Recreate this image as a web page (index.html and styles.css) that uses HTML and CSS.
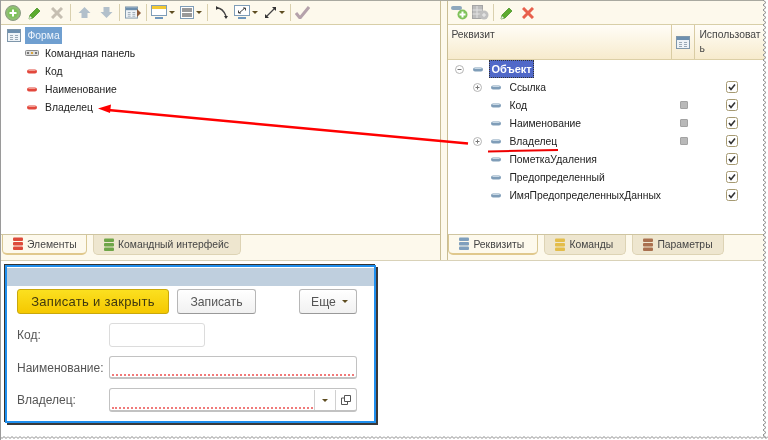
FILE: index.html
```html
<!DOCTYPE html>
<html lang="ru">
<head>
    <meta charset="UTF-8">
    <title>Форма</title>
    <link rel="stylesheet" href="styles.css">
</head>
<body>

<svg class="defs" width="0" height="0">
    <defs>
        <symbol id="i-form" viewBox="0 0 14 13">
            <rect x="0.5" y="0.5" width="13" height="12" fill="#eef3f7" stroke="#7f97ab"/>
            <rect x="1" y="1" width="12" height="3" fill="#6d8fae"/>
            <path d="M3 6.500h3M8 6.500h3M3 8.500h3M8 8.500h3M3 10.500h3M8 10.500h3" stroke="#9aa9b6"/>
        </symbol>
        <symbol id="i-red" viewBox="0 0 10 5">
            <rect x="0" y="0.5" width="10" height="4" rx="2" fill="#e2473c"/>
            <rect x="1.5" y="1" width="7" height="1" fill="#f09a8e"/>
        </symbol>
        <symbol id="i-blue" viewBox="0 0 10 5">
            <rect x="0" y="0.5" width="10" height="4" rx="2" fill="#7f9db8"/>
            <rect x="1.5" y="1" width="7" height="1" fill="#c6d6e3"/>
        </symbol>
        <symbol id="i-stack" viewBox="0 0 10 14">
            <rect x="0" y="0.5" width="10" height="3.6" rx="1" fill="currentColor"/>
            <rect x="0" y="5" width="10" height="3.6" rx="1" fill="currentColor"/>
            <rect x="0" y="9.5" width="10" height="3.6" rx="1" fill="currentColor"/>
        </symbol>
        <symbol id="i-pencil" viewBox="0 0 14 14">
            <path d="M1 13l1-4 7-7 3 3-7 7z" fill="#5cab2e" stroke="#3c8a1c" stroke-width=".7"/>
            <path d="M1 13l1-3 2 2z" fill="#eee"/>
        </symbol>
        <symbol id="i-caret" viewBox="0 0 6 3">
            <path d="M0 0h6L3 3z" fill="#5e4d20"/>
        </symbol>
        <symbol id="i-plus" viewBox="0 0 9 9">
            <circle cx="4.5" cy="4.5" r="4" fill="#fff" stroke="#b4b4b4"/>
            <path d="M2.500 4.500h4M4.500 2.500v4" stroke="#777"/>
        </symbol>
        <symbol id="i-check" viewBox="0 0 12 12">
            <rect x="0.5" y="0.5" width="11" height="11" rx="2" fill="#fff" stroke="#a69a72"/>
            <path d="M3 6l2 2.500 4-5" fill="none" stroke="#333" stroke-width="1.600"/>
        </symbol>
    </defs>
</svg>

<div class="shot">
    <div class="top">
        <!-- left panel -->
        <div class="panel panel-left">
            <div class="toolbar">
                <span class="tool">
                    <svg width="16" height="16" viewBox="0 0 16 16"><circle cx="8" cy="8" r="7.500" fill="#8fbf72" stroke="#8c9a84"/><circle cx="8" cy="8" r="5" fill="#7fc25a"/><path d="M4.500 8h7M8 4.500v7" stroke="#fff" stroke-width="2"/></svg>
                </span>
                <span class="tool"><svg width="14" height="14"><use href="#i-pencil"/></svg></span>
                <span class="tool">
                    <svg width="12" height="12" viewBox="0 0 12 12"><path d="M1 1l10 10M11 1L1 11" stroke="#c6bfb2" stroke-width="3"/></svg>
                </span>
                <span class="sep"></span>
                <span class="tool">
                    <svg width="13" height="13" viewBox="0 0 13 13"><path d="M6.500 1L12.500 7H9.500V12H3.500V7H.5z" fill="#b2c0cb"/></svg>
                </span>
                <span class="tool">
                    <svg width="13" height="13" viewBox="0 0 13 13"><path d="M6.500 12L12.500 6H9.500V1H3.500V6H.5z" fill="#b2c0cb"/></svg>
                </span>
                <span class="sep"></span>
                <span class="tool">
                    <svg width="16" height="13" viewBox="0 0 16 13"><use href="#i-form" width="13" height="13"/><path d="M12 3l4 4-4 4z" fill="#8a5a3a"/></svg>
                </span>
                <span class="sep"></span>
                <span class="tool tool-drop">
                    <svg width="16" height="15" viewBox="0 0 16 15"><rect x="0.500" y="0.500" width="15" height="10" fill="#fff" stroke="#7f9db8"/><rect x="1" y="1" width="14" height="3" fill="#f2c933"/><path d="M4 13h8" stroke="#6f97bd" stroke-width="2"/></svg>
                    <svg class="caret" width="6" height="3"><use href="#i-caret"/></svg>
                </span>
                <span class="tool tool-drop">
                    <svg width="14" height="13" viewBox="0 0 14 13"><rect x="0.500" y="0.500" width="13" height="12" fill="#fff" stroke="#7f9db8"/><rect x="2" y="2" width="10" height="4" fill="#999"/><rect x="2" y="7" width="10" height="4" fill="#999"/></svg>
                    <svg class="caret" width="6" height="3"><use href="#i-caret"/></svg>
                </span>
                <span class="sep"></span>
                <span class="tool">
                    <svg width="13" height="13" viewBox="0 0 13 13"><path d="M2 2c4 0 7 3 9 8" fill="none" stroke="#444" stroke-width="1.300"/><path d="M1 0v4l3-2zM9 10h4l-2 3z" fill="#333"/></svg>
                </span>
                <span class="tool tool-drop">
                    <svg width="16" height="15" viewBox="0 0 16 15"><rect x="0.500" y="0.500" width="15" height="10" fill="#fff" stroke="#7f9db8"/><path d="M5 8l6-5M9 3h2.500v2.500M7 8H4.500V5.500" fill="none" stroke="#444"/><path d="M4 13h8" stroke="#6f97bd" stroke-width="2"/></svg>
                    <svg class="caret" width="6" height="3"><use href="#i-caret"/></svg>
                </span>
                <span class="tool tool-drop">
                    <svg width="13" height="13" viewBox="0 0 13 13"><path d="M2 11l9-9" stroke="#444" stroke-width="1.300"/><path d="M8 1h4v4zM1 8v4h4z" fill="#333"/></svg>
                    <svg class="caret" width="6" height="3"><use href="#i-caret"/></svg>
                </span>
                <span class="sep"></span>
                <span class="tool tool-last">
                    <svg width="15" height="13" viewBox="0 0 15 13"><path d="M1 7l4 5L14 1" fill="none" stroke="#b5a2ab" stroke-width="3"/></svg>
                </span>
            </div>

            <div class="form-tree">
                <div class="row row-root">
                    <svg class="row-icon" width="14" height="13"><use href="#i-form"/></svg>
                    <span class="label-sel">Форма</span>
                </div>
                <div class="row row-child">
                    <span class="row-ic">
                        <svg width="14" height="6" viewBox="0 0 14 6"><rect x="0.500" y="0.500" width="13" height="5" rx="1" fill="#ddd" stroke="#8a8a8a"/><path d="M2 2h2v2H2z" fill="#777"/><path d="M6 2h2v2H6z" fill="#d9a53b"/><path d="M10 2h2v2h-2z" fill="#777"/></svg>
                    </span>
                    Командная панель
                </div>
                <div class="row row-child">
                    <span class="row-ic"><svg width="10" height="5"><use href="#i-red"/></svg></span>
                    Код
                </div>
                <div class="row row-child">
                    <span class="row-ic"><svg width="10" height="5"><use href="#i-red"/></svg></span>
                    Наименование
                </div>
                <div class="row row-child">
                    <span class="row-ic"><svg width="10" height="5"><use href="#i-red"/></svg></span>
                    Владелец
                </div>
            </div>

            <div class="tabs">
                <div class="tab tab-on tab-elements">
                    <svg class="stack-red" width="10" height="14"><use href="#i-stack"/></svg>
                    Элементы
                </div>
                <div class="tab tab-cmd">
                    <svg class="stack-green" width="10" height="14"><use href="#i-stack"/></svg>
                    Командный интерфейс
                </div>
            </div>
        </div>

        <!-- right panel -->
        <div class="panel panel-right">
            <div class="toolbar">
                <span class="tool tool-r1">
                    <svg width="17" height="15" viewBox="0 0 17 15"><rect x="0" y="1" width="11" height="4" rx="2" fill="#8ea8bd"/><circle cx="11.500" cy="9.500" r="5" fill="#7fc25a"/><path d="M8.500 9.500h6M11.500 6.500v6" stroke="#fff" stroke-width="2"/></svg>
                </span>
                <span class="tool tool-r1">
                    <svg width="17" height="15" viewBox="0 0 17 15"><rect x="0.500" y="0.500" width="10" height="13" fill="#bdbdbd" stroke="#a5a5a5"/><path d="M.5 5h10M.5 9h10M5 1v12" stroke="#e3e3e3"/><circle cx="12" cy="10" r="4.500" fill="#c0c0c0"/><path d="M10 10h4M12 8v4" stroke="#eee"/></svg>
                </span>
                <span class="sep"></span>
                <span class="tool"><svg width="14" height="14"><use href="#i-pencil"/></svg></span>
                <span class="tool tool-r4">
                    <svg width="12" height="12" viewBox="0 0 12 12"><path d="M1 1l10 10M11 1L1 11" stroke="#e8604c" stroke-width="3"/></svg>
                </span>
            </div>

            <div class="grid-head">
                <div class="hcol hcol-name">Реквизит</div>
                <div class="hcol hcol-mark"><svg width="14" height="13"><use href="#i-form"/></svg></div>
                <div class="hcol hcol-use">Использовать</div>
            </div>

            <div class="attr-tree">
                <div class="attr-row lvl-0">
                    <div class="attr-name">
                        <svg class="exp" width="9" height="9" viewBox="0 0 9 9"><circle cx="4.500" cy="4.500" r="4" fill="#fff" stroke="#b4b4b4"/><path d="M2.500 4.500h4" stroke="#777"/></svg>
                        <svg class="attr-ic" width="10" height="5"><use href="#i-blue"/></svg>
                        <span class="label-cur">Объект</span>
                    </div>
                    <div class="attr-mark"></div>
                    <div class="attr-use"></div>
                </div>
                <div class="attr-row">
                    <div class="attr-name">
                        <svg class="exp" width="9" height="9"><use href="#i-plus"/></svg>
                        <svg class="attr-ic" width="10" height="5"><use href="#i-blue"/></svg>
                        <span class="label">Ссылка</span>
                    </div>
                    <div class="attr-mark"></div>
                    <div class="attr-use"><svg width="12" height="12"><use href="#i-check"/></svg></div>
                </div>
                <div class="attr-row">
                    <div class="attr-name">
                        <span class="exp"></span>
                        <svg class="attr-ic" width="10" height="5"><use href="#i-blue"/></svg>
                        <span class="label">Код</span>
                    </div>
                    <div class="attr-mark"><span class="dot"></span></div>
                    <div class="attr-use"><svg width="12" height="12"><use href="#i-check"/></svg></div>
                </div>
                <div class="attr-row">
                    <div class="attr-name">
                        <span class="exp"></span>
                        <svg class="attr-ic" width="10" height="5"><use href="#i-blue"/></svg>
                        <span class="label">Наименование</span>
                    </div>
                    <div class="attr-mark"><span class="dot"></span></div>
                    <div class="attr-use"><svg width="12" height="12"><use href="#i-check"/></svg></div>
                </div>
                <div class="attr-row">
                    <div class="attr-name">
                        <svg class="exp" width="9" height="9"><use href="#i-plus"/></svg>
                        <svg class="attr-ic" width="10" height="5"><use href="#i-blue"/></svg>
                        <span class="label">Владелец</span>
                    </div>
                    <div class="attr-mark"><span class="dot"></span></div>
                    <div class="attr-use"><svg width="12" height="12"><use href="#i-check"/></svg></div>
                </div>
                <div class="attr-row">
                    <div class="attr-name">
                        <span class="exp"></span>
                        <svg class="attr-ic" width="10" height="5"><use href="#i-blue"/></svg>
                        <span class="label">ПометкаУдаления</span>
                    </div>
                    <div class="attr-mark"></div>
                    <div class="attr-use"><svg width="12" height="12"><use href="#i-check"/></svg></div>
                </div>
                <div class="attr-row">
                    <div class="attr-name">
                        <span class="exp"></span>
                        <svg class="attr-ic" width="10" height="5"><use href="#i-blue"/></svg>
                        <span class="label">Предопределенный</span>
                    </div>
                    <div class="attr-mark"></div>
                    <div class="attr-use"><svg width="12" height="12"><use href="#i-check"/></svg></div>
                </div>
                <div class="attr-row">
                    <div class="attr-name">
                        <span class="exp"></span>
                        <svg class="attr-ic" width="10" height="5"><use href="#i-blue"/></svg>
                        <span class="label">ИмяПредопределенныхДанных</span>
                    </div>
                    <div class="attr-mark"></div>
                    <div class="attr-use"><svg width="12" height="12"><use href="#i-check"/></svg></div>
                </div>
            </div>

            <div class="tabs tabs-right">
                <div class="tab tab-on tab-attrs">
                    <svg class="stack-blue" width="10" height="14"><use href="#i-stack"/></svg>
                    Реквизиты
                </div>
                <div class="tab tab-cmds">
                    <svg class="stack-yellow" width="10" height="14"><use href="#i-stack"/></svg>
                    Команды
                </div>
                <div class="tab tab-params">
                    <svg class="stack-brown" width="10" height="14"><use href="#i-stack"/></svg>
                    Параметры
                </div>
            </div>
        </div>
    </div>

    <!-- preview of the form -->
    <div class="preview">
        <div class="win">
            <div class="win-title"></div>
            <div class="win-bar">
                <button class="btn btn-main">Записать и закрыть</button>
                <button class="btn btn-save">Записать</button>
                <button class="btn btn-more">Еще<svg width="6" height="3"><use href="#i-caret"/></svg></button>
            </div>
            <div class="fields">
                <label class="f-label">Код:</label>
                <div class="inp inp-short"></div>
                <label class="f-label">Наименование:</label>
                <div class="inp"><span class="req"></span></div>
                <label class="f-label">Владелец:</label>
                <div class="inp inp-pick">
                    <span class="req"></span>
                    <span class="pick"><svg width="6" height="3"><use href="#i-caret"/></svg></span>
                    <span class="pick">
                        <svg width="10" height="10" viewBox="0 0 10 10"><path d="M3.500.5h6v6h-6zM3.500 3H.5v6.500h6V6.500" fill="none" stroke="#555"/></svg>
                    </span>
                </div>
            </div>
        </div>
    </div>

    <!-- annotations -->
    <svg class="marks" width="768" height="440" viewBox="0 0 768 440">
        <path d="M468 143.500L108 110" stroke="#f00" stroke-width="2.500" fill="none"/>
        <path d="M98 108.500L111 104.500L110 113z" fill="#f00"/>
        <path d="M488 151.500L558 150" stroke="#e00" stroke-width="2" fill="none"/>
    </svg>

    <!-- torn edges -->
    <svg class="torn torn-right" width="7" height="440">
        <defs>
            <pattern id="zig-v" width="7" height="10" patternUnits="userSpaceOnUse">
                <path d="M2 0L5 2.500L2 5L5 7.500L2 10H7V0z" fill="#fff"/>
                <path d="M2 0L5 2.500L2 5L5 7.500L2 10" fill="none" stroke="#8a8a8a"/>
            </pattern>
        </defs>
        <rect width="7" height="440" fill="url(#zig-v)"/>
    </svg>
    <svg class="torn torn-bottom" width="768" height="6">
        <defs>
            <pattern id="zig-h" width="8" height="6" patternUnits="userSpaceOnUse">
                <path d="M0 2.500L2 4.500L4 2.500L6 4.500L8 2.500V6H0z" fill="#fff"/>
                <path d="M0 2.500L2 4.500L4 2.500L6 4.500L8 2.500" fill="none" stroke="#8a8a8a"/>
            </pattern>
        </defs>
        <rect width="768" height="6" fill="url(#zig-h)"/>
    </svg>
</div>

</body>
</html>
```
FILE: styles.css
```css
html,body{margin: 0; padding: 0; background: #fff;}
body{font-family: "Liberation Sans", Arial, sans-serif; font-size: 10.35px; color: #222;}
.defs{position: absolute;}

.shot{
    position: relative;
    display: flex;
    flex-direction: column;
    width: 768px;
    height: 440px;
    overflow: hidden;
    background: #fff;
    border-left: 1px solid #9a9a9a;
    box-sizing: border-box;
    filter: blur(0.35px);
}

.top{
    display: flex;
    height: 261px;
    background: #fdf9ec;
    border-top: 1px solid #a9a9a0;
    border-bottom: 1px solid #d9d2b8;
    box-sizing: border-box;
}
.panel{display: flex; flex-direction: column;}
.panel-left{width: 440px; border-right: 1px solid #c9bd94;}
.panel-right{width: 320px; margin-left: 6px; border-left: 1px solid #c9bd94;}

/* toolbar */
.toolbar{
    display: flex;
    align-items: center;
    flex: none;
    height: 23px;
    padding-left: 1px;
    background: #fdf9ec;
    border-bottom: 1px solid #d8cfa8;
}
.tool{display: flex; align-items: center; justify-content: center; gap: 2px; width: 22px; height: 22px;}
.tool-drop{width: 28px;}
.tool-last{margin-left: -2px;}
.sep{width: 1px; height: 17px; margin: 0 2px; background: #d9d0ae;}
.caret{flex: none;}
.tool-r1{width: 21px;}
.tool-r4{width: 20px;}

/* left tree */
.form-tree{flex: 1; padding-top: 1px; background: #fff;}
.row{display: flex; align-items: center; height: 18px;}
.row-root{padding-left: 6px;}
.row-root .row-icon{margin-right: 4px;}
.label-sel{padding: 1px 2.5px; line-height: 15px; background: #6f9fd0; color: #eef4fb;}
.row-child{padding-left: 23px;}
.row-ic{display: flex; justify-content: center; flex: none; width: 15px; margin-right: 6px;}

/* tabs */
.tabs{
    display: flex;
    flex: none;
    gap: 6px;
    height: 26px;
    padding-left: 1px;
    border-top: 1px solid #cfc5a0;
    background: #fdf9ec;
    box-sizing: border-box;
}
.tabs-right{padding-left: 0;}
.tab{
    display: flex;
    align-items: center;
    gap: 4px;
    height: 20px;
    padding-left: 10px;
    box-sizing: border-box;
    background: #eee6cf;
    border: 1px solid #ddd3b4;
    border-top: 0;
    border-radius: 0 0 5px 5px;
    color: #444;
}
.tab-on{background: #fdf9ec; border-color: #d8c793; border-bottom: 2px solid #e0c88c;}
.tab-elements{width: 85px;}
.tab-cmd{width: 148px;}
.tab-attrs{width: 90px;}
.tab-cmds{width: 82px;}
.tab-params{width: 92px;}
.stack-red{color: #dd4a3a;}
.stack-green{color: #6ea548;}
.stack-blue{color: #7f9fbd;}
.stack-yellow{color: #e3bd4b;}
.stack-brown{color: #a9704f;}

/* attribute grid */
.grid-head{
    display: flex;
    flex: none;
    height: 35px;
    background: linear-gradient(#fffdf7, #f7ebcd);
    border-bottom: 1px solid #dccfa6;
    box-sizing: border-box;
    color: #444;
}
.hcol{padding: 3px; box-sizing: border-box; line-height: 14px; border-right: 1px solid #d9cca3;}
.hcol-name{width: 224px;}
.hcol-mark{display: flex; align-items: center; justify-content: center; width: 23px; padding: 0;}
.hcol-use{width: 68px; padding: 3px 0 3px 4px; border-right: 0; word-break: break-all;}

.attr-tree{flex: 1; background: #fff;}
.attr-row{display: flex; height: 18px;}
.attr-name{display: flex; align-items: center; width: 224px; padding-left: 23px; box-sizing: border-box;}
.attr-mark{display: flex; align-items: center; justify-content: center; width: 23px;}
.attr-use{display: flex; align-items: center; justify-content: center; width: 68px; padding-left: 6px; box-sizing: border-box;}
.lvl-0 .attr-name{padding-left: 5px;}
.exp{flex: none; width: 9px; height: 9px; margin: 0 2px;}
.attr-ic{flex: none; margin: 0 6px 0 7px;}
.label{padding: 0 2px;}
.label-cur{
    padding: 0 2px;
    font-size: 11px;
    line-height: 18px;
    background: #5068c8;
    color: #fff;
    font-weight: bold;
    outline: 1px dotted #333;
    outline-offset: -1px;
}
.dot{display: block; width: 6px; height: 6px; background: #b9b9b9; border: 1px solid #a3a3a3; border-radius: 1px;}

/* form preview */
.preview{padding: 4px 0 0 4px;}
.win{
    display: flex;
    flex-direction: column;
    width: 371px;
    height: 158px;
    box-sizing: border-box;
    background: #fff;
    border: 2px solid #1f8fee;
    box-shadow: -1px -1px 0 #333, 2px 2px 0 #3a3a3a;
}
.win-title{flex: none; height: 18px; margin-top: 1px; background: #bfcfde;}
.win-bar{display: flex; flex: none; gap: 8px; height: 25px; margin-top: 3px; padding: 0 17px 0 10px;}
.btn{
    display: flex;
    align-items: center;
    justify-content: center;
    gap: 6px;
    height: 25px;
    padding: 0;
    box-sizing: border-box;
    font-family: "Liberation Sans", Arial, sans-serif;
    font-size: 12.2px;
    color: #555;
    background: linear-gradient(#fff, #f1f1f1);
    border: 1px solid #b7b7b7;
    border-bottom-color: #999;
    border-radius: 3px;
}
.btn-main{
    width: 152px;
    font-size: 13px;
    color: #3f380f;
    letter-spacing: .3px;
    background: linear-gradient(#fbe020, #f5c800);
    border-color: #c9a80c;
}
.btn-save{width: 79px;}
.btn-more{width: 58px; margin-left: auto; padding-left: 3px;}

.fields{
    display: grid;
    grid-template-columns: 92px 248px;
    grid-template-rows: 24px 23px 24px;
    row-gap: 9px;
    align-items: center;
    margin-top: 9px;
    padding-left: 10px;
}
.f-label{font-size: 12px; color: #555;}
.inp{
    display: flex;
    align-items: flex-end;
    height: 100%;
    padding: 0 2px 1px;
    box-sizing: border-box;
    background: #fff;
    border: 1px solid #c2c2c2;
    border-bottom-width: 2px;
    border-radius: 3px;
}
.inp-short{width: 96px; border: 1px solid #dcdcdc;}
.req{flex: 1; border-bottom: 2px dotted #f07a7a;}
.inp-pick{padding-right: 0;}
.inp-pick .req{margin-right: 1px;}
.pick{
    display: flex;
    align-items: center;
    justify-content: center;
    width: 20px;
    height: 100%;
    margin-bottom: -1px;
    border-left: 1px solid #d0d0d0;
}

/* overlays */
.marks{position: absolute; left: -1px; top: 0; pointer-events: none;}
.torn{position: absolute;}
.torn-right{right: 0; top: 0;}
.torn-bottom{left: -1px; bottom: 0;}
```
